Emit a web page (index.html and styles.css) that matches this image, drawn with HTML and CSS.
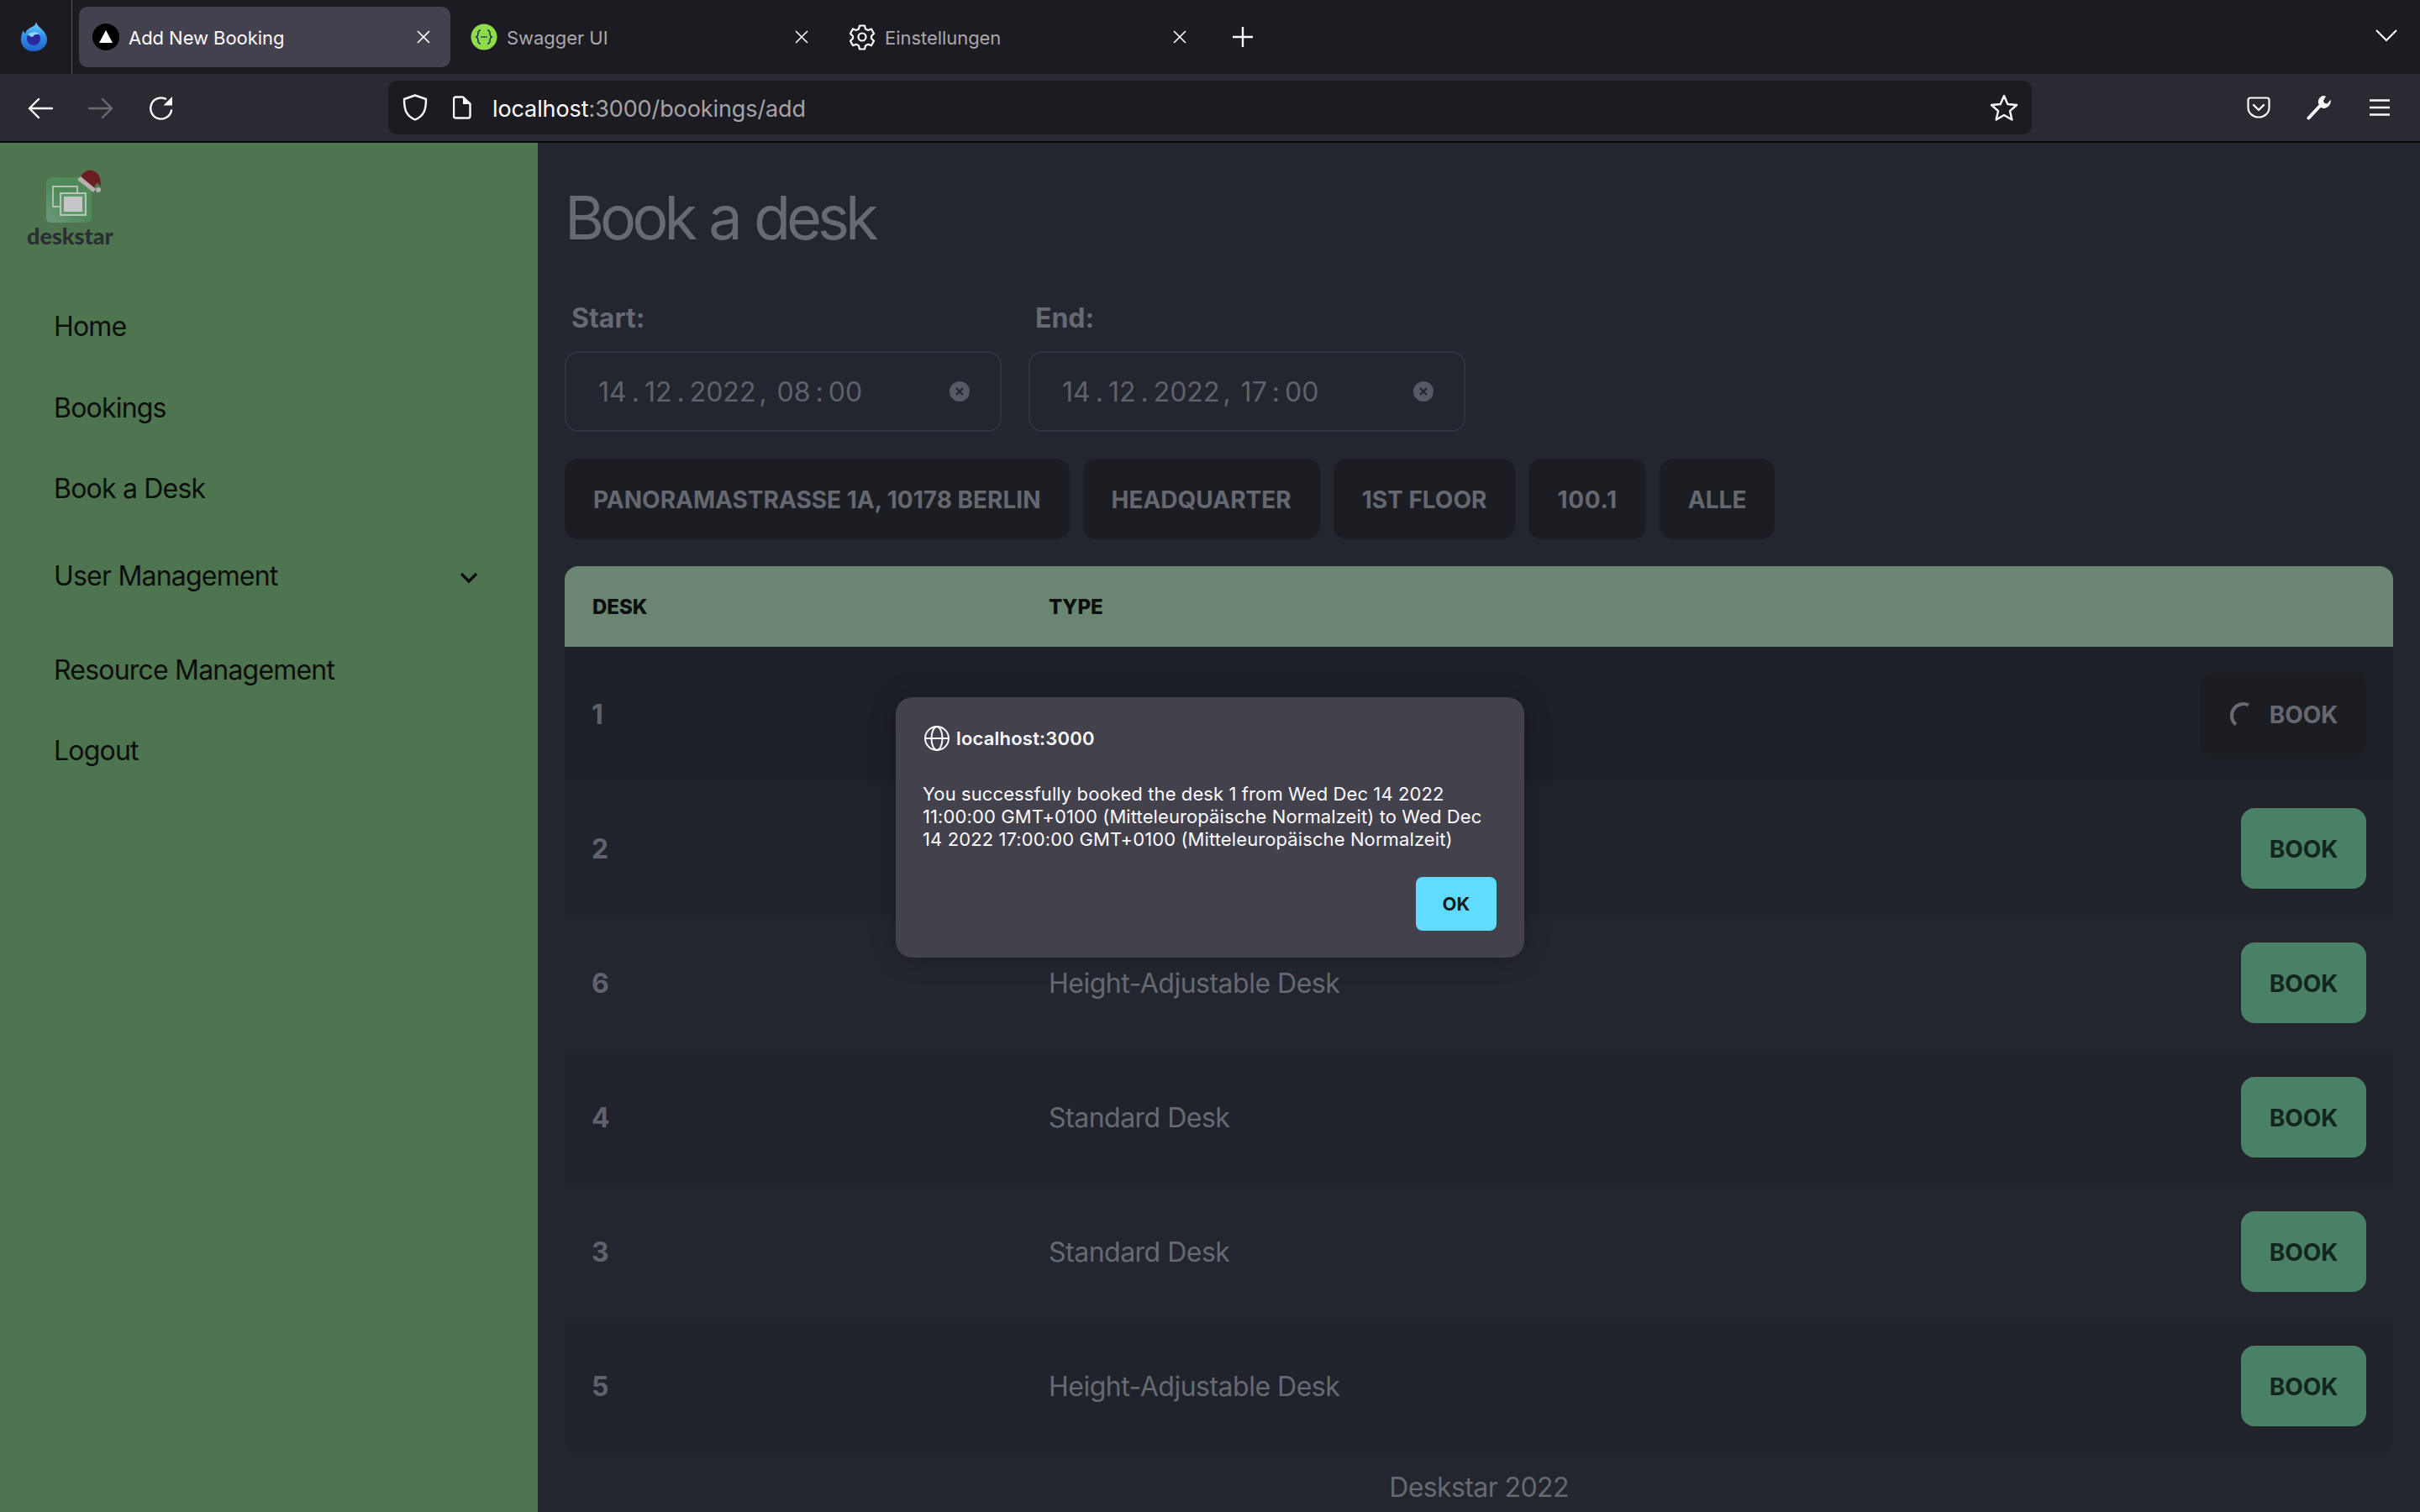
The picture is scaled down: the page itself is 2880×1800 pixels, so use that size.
FILE: index.html
```html
<!DOCTYPE html>
<html lang="en">
<head>
<meta charset="utf-8">
<title>Add New Booking</title>
<link rel="stylesheet" href="styles.css">
</head>
<body>
<header class="tabbar">
  <div class="fx-slot">
    <svg width="34" height="36" viewBox="0 0 34 36">
      <defs><linearGradient id="fxg" x1="0" y1="0" x2="0" y2="1"><stop offset="0" stop-color="#6fd3ff"/><stop offset="0.5" stop-color="#2f8fe8"/><stop offset="1" stop-color="#1f63cf"/></linearGradient></defs>
      <path d="M20 1c1 4 4 6 7 9 4 4 6 8 6 12 0 8-7 14-16 14S2 30 2 22c0-4 1-8 3-11 0 2 1 3 2 4 1-4 4-6 8-8 3-1 5-3 5-6z" fill="url(#fxg)"/>
      <circle cx="17" cy="21" r="8" fill="#2b2a9c"/>
      <path d="M10 16c4-4 11-4 15 0-4-1-8 0-9 3-2 0-4-1-6-3z" fill="#8ad4ff"/>
    </svg>
  </div>
  <div class="tab tab-active">
    <svg class="favicon" width="32" height="32" viewBox="0 0 32 32"><circle cx="16" cy="16" r="16" fill="#000"/><path d="M16 8l8 15H8z" fill="#fff"/></svg>
    <span class="tab-title">Add New Booking</span>
    <svg class="tab-close" width="16" height="16" viewBox="0 0 16 16"><path d="M1 1l14 14M15 1L1 15" stroke="#fbfbfe" stroke-width="1.6" fill="none"/></svg>
  </div>
  <div class="tab">
    <svg class="favicon" width="32" height="32" viewBox="0 0 32 32"><circle cx="16" cy="16" r="15.5" fill="#8edb4b"/><path d="M12 8c-3 0-3 2-3 4s0 3-2 4c2 1 2 2 2 4s0 4 3 4M20 8c3 0 3 2 3 4s0 3 2 4c-2 1-2 2-2 4s0 4-3 4" stroke="#173647" stroke-width="1.6" fill="none"/><path d="M12.500 16h7" stroke="#173647" stroke-width="1.800" stroke-dasharray="1.800 1" fill="none"/></svg>
    <span class="tab-title">Swagger UI</span>
    <svg class="tab-close" width="16" height="16" viewBox="0 0 16 16"><path d="M1 1l14 14M15 1L1 15" stroke="#fbfbfe" stroke-width="1.6" fill="none"/></svg>
  </div>
  <div class="tab">
    <svg class="favicon" width="32" height="32" viewBox="0 0 32 32"><g fill="none" stroke="#fbfbfe" stroke-width="2.200" stroke-linejoin="round"><path d="M13 2.500h6l1 4 3 1.500 4-1.500 3 5.500-3 3v2.800l3 3-3 5.300-4-1.300-3 1.600-1 4.100h-6l-1-4.100-3-1.600-4 1.300-3-5.300 3-3v-2.800l-3-3 3-5.500 4 1.500 3-1.500z"/><circle cx="16" cy="16" r="4.500"/></g></svg>
    <span class="tab-title">Einstellungen</span>
    <svg class="tab-close" width="16" height="16" viewBox="0 0 16 16"><path d="M1 1l14 14M15 1L1 15" stroke="#fbfbfe" stroke-width="1.6" fill="none"/></svg>
  </div>
  <div class="new-tab">
    <svg width="24" height="24" viewBox="0 0 24 24"><path d="M12 0v24M0 12h24" stroke="#fbfbfe" stroke-width="2.400" fill="none"/></svg>
  </div>
  <div class="tab-list">
    <svg width="26" height="16" viewBox="0 0 26 16"><path d="M1 2l12 12L25 2" stroke="#fbfbfe" stroke-width="2" fill="none"/></svg>
  </div>
</header>

<nav class="toolbar">
  <div class="tool"><svg width="30" height="26" viewBox="0 0 30 26"><path d="M29 13H3M13 2L2 13l11 11" stroke="#fbfbfe" stroke-width="2.400" fill="none" stroke-linecap="round" stroke-linejoin="round"/></svg></div>
  <div class="tool"><svg width="30" height="26" viewBox="0 0 30 26"><path d="M1 13h26M17 2l11 11-11 11" stroke="#6c6b72" stroke-width="2.400" fill="none" stroke-linecap="round" stroke-linejoin="round"/></svg></div>
  <div class="tool"><svg width="30" height="30" viewBox="0 0 30 30"><path d="M27 17.500A12.500 12.500 0 1 1 20 3.700" stroke="#fbfbfe" stroke-width="2.400" fill="none" stroke-linecap="round"/><path d="M28 1v10.500H17.500z" fill="#fbfbfe"/></svg></div>
  <div class="urlbar">
    <svg class="url-shield" width="30" height="32" viewBox="0 0 30 32"><path d="M15 1.500L28 6c0 12-2 20-13 24.500C4 26 2 18 2 6z" stroke="#fbfbfe" stroke-width="2.400" fill="none" stroke-linejoin="round"/></svg>
    <svg class="url-doc" width="22" height="28" viewBox="0 0 22 28"><path d="M3 1.500h9l8.500 8V24a2.500 2.500 0 0 1-2.500 2.500H3.500A2.500 2.500 0 0 1 1 24V4a2.500 2.500 0 0 1 2-2.500z" stroke="#fbfbfe" stroke-width="2.400" fill="none" stroke-linejoin="round"/><path d="M12 2v8h8" fill="#fbfbfe"/></svg>
    <span class="url-text"><span class="url-host">localhost</span>:3000/bookings/add</span>
    <svg class="url-star" width="34" height="32" viewBox="0 0 34 32"><path d="M17 2l4.300 10 10.700 1-8 7.200 2.400 10.300L17 25l-9.400 5.500L10 20.200 2 13l10.700-1z" stroke="#fbfbfe" stroke-width="2.400" fill="none" stroke-linejoin="round"/></svg>
  </div>
  <div class="tool-group">
    <div class="tool"><svg width="28" height="26" viewBox="0 0 28 26"><path d="M4 1.500h20a2.500 2.500 0 0 1 2.500 2.500v9c0 7-6 11.500-12.500 11.500S1.500 20 1.500 13V4A2.500 2.500 0 0 1 4 1.500z" stroke="#fbfbfe" stroke-width="2.200" fill="none"/><path d="M8 10l6 6 6-6" stroke="#fbfbfe" stroke-width="2.400" fill="none" stroke-linecap="round" stroke-linejoin="round"/></svg></div>
    <div class="tool"><svg width="30" height="30" viewBox="0 0 30 30"><path d="M2.500 27.500l13-14" stroke="#fbfbfe" stroke-width="4" stroke-linecap="round"/><path d="M20 1c-4 1-7 5-6 9s3 6 6 6c5 0 9-4 9-9l-5 4-3-1-1-3 4-5z" fill="#fbfbfe" transform="rotate(-8 20 8)"/></svg></div>
    <div class="tool"><svg width="24" height="20" viewBox="0 0 24 20"><path d="M0 1.500h24M0 10h24M0 18.500h24" stroke="#fbfbfe" stroke-width="2.400" fill="none"/></svg></div>
  </div>
</nav>

<div class="app">
  <aside class="sidebar">
    <div class="brand">
      <svg class="brand-mark" width="92" height="64" viewBox="0 0 92 64">
        <defs><linearGradient id="mark" x1="0" y1="1" x2="1" y2="0"><stop offset="0" stop-color="#6f9a80"/><stop offset="0.45" stop-color="#4f8b5a"/><stop offset="1" stop-color="#4c8a56"/></linearGradient></defs>
        <rect x="23" y="9" width="54" height="54" rx="6" fill="url(#mark)"/>
        <rect x="31" y="20" width="29" height="24" fill="none" stroke="#b3bdb6" stroke-width="2"/>
        <rect x="40" y="28" width="30" height="26" fill="#5c9a68" stroke="#b9c2bc" stroke-width="2"/>
        <rect x="44" y="32" width="22" height="18" fill="#c5c5ca"/>
        <path d="M64 9C66 3 72 0 78 1c8 2 10 9 10 20-1-3-3-5-5-5l-5 8z" fill="#6a1e24"/>
        <path d="M60 12l4-4 18 15-3 4z" fill="#b8b0b0"/>
        <circle cx="85" cy="24" r="3" fill="#b8b0b0"/>
      </svg>
      <span class="brand-name">deskstar</span>
    </div>
    <ul class="menu">
      <li class="menu-item">Home</li>
      <li class="menu-item">Bookings</li>
      <li class="menu-item">Book a Desk</li>
      <li class="menu-item menu-group">User Management
        <svg width="22" height="14" viewBox="0 0 22 14"><path d="M2 2l9 9 9-9" stroke="#0b0e0b" stroke-width="3.400" fill="none"/></svg>
      </li>
      <li class="menu-item">Resource Management</li>
      <li class="menu-item">Logout</li>
    </ul>
  </aside>

  <main class="content">
    <h1 class="title">Book a desk</h1>
    <div class="dates">
      <div class="field">
        <label class="field-label">Start:</label>
        <div class="date-input">
          <span class="date-text">14<i class="sep">.</i>12<i class="sep">.</i>2022<i class="comma">,</i>08<i class="sep">:</i>00</span>
          <svg width="24" height="24" viewBox="0 0 24 24"><circle cx="12" cy="12" r="12" fill="#565963"/><path d="M8 8l8 8M16 8l-8 8" stroke="#23262f" stroke-width="2.400"/></svg>
        </div>
      </div>
      <div class="field">
        <label class="field-label">End:</label>
        <div class="date-input">
          <span class="date-text">14<i class="sep">.</i>12<i class="sep">.</i>2022<i class="comma">,</i>17<i class="sep">:</i>00</span>
          <svg width="24" height="24" viewBox="0 0 24 24"><circle cx="12" cy="12" r="12" fill="#565963"/><path d="M8 8l8 8M16 8l-8 8" stroke="#23262f" stroke-width="2.400"/></svg>
        </div>
      </div>
    </div>
    <div class="filters">
      <button class="btn btn-dark">Panoramastrasse 1a, 10178 Berlin</button>
      <button class="btn btn-dark">Headquarter</button>
      <button class="btn btn-dark">1st Floor</button>
      <button class="btn btn-dark btn-number">100.1</button>
      <button class="btn btn-dark">Alle</button>
    </div>
    <section class="table">
      <div class="thead"><span>Desk</span><span>Type</span></div>
      <div class="row row-hover">
        <b class="desk">1</b><span class="type"></span>
        <button class="btn btn-dark">
          <svg class="spinner" width="30" height="34" viewBox="0 0 30 34"><path d="M24 5.300A14 14 0 0 0 8.900 28.600" stroke="#696b74" stroke-width="4" fill="none"/></svg>Book</button>
      </div>
      <div class="row row-odd"><b class="desk">2</b><span class="type"></span><button class="btn btn-book">Book</button></div>
      <div class="row"><b class="desk">6</b><span class="type">Height-Adjustable Desk</span><button class="btn btn-book">Book</button></div>
      <div class="row row-odd"><b class="desk">4</b><span class="type">Standard Desk</span><button class="btn btn-book">Book</button></div>
      <div class="row"><b class="desk">3</b><span class="type">Standard Desk</span><button class="btn btn-book">Book</button></div>
      <div class="row row-odd row-last"><b class="desk">5</b><span class="type">Height-Adjustable Desk</span><button class="btn btn-book">Book</button></div>
    </section>
    <footer class="footer">Deskstar 2022</footer>
  </main>
</div>

<div class="dialog">
  <div class="dialog-head">
    <svg width="30" height="30" viewBox="0 0 30 30"><g fill="none" stroke="#fbfbfe" stroke-width="2"><circle cx="15" cy="15" r="14"/><ellipse cx="15" cy="15" rx="6.500" ry="14"/><path d="M1 15h28"/></g></svg>
    <span>localhost:3000</span>
  </div>
  <p class="dialog-body">You successfully booked the desk 1 from Wed Dec 14 2022 11:00:00 GMT+0100 (Mitteleuropäische Normalzeit) to Wed Dec 14 2022 17:00:00 GMT+0100 (Mitteleuropäische Normalzeit)</p>
  <div class="dialog-foot"><button class="dialog-ok">OK</button></div>
</div>
</body>
</html>
```

FILE: styles.css
```css
* { box-sizing: border-box; }
html, body { margin: 0; padding: 0; }
body {
  width: 2880px;
  height: 1800px;
  overflow: hidden;
  background: #23262f;
  font-family: Inter, "Liberation Sans", sans-serif;
  display: flex;
  flex-direction: column;
}

/* browser chrome */
.tabbar {
  height: 88px;
  flex: none;
  background: #1c1b22;
  display: flex;
  align-items: center;
}
.fx-slot {
  width: 86px;
  height: 88px;
  display: flex;
  align-items: center;
  padding: 0 0 2px 23px;
  border-right: 1px solid #56555c;
  margin-right: 8px;
}
.tab {
  width: 442px;
  height: 72px;
  margin-right: 8px;
  padding: 0 24px 0 16px;
  display: flex;
  align-items: center;
  gap: 11px;
  border-radius: 10px;
  color: #a9a8ad;
  font-size: 22px;
  letter-spacing: -0.05px;
}
.tab-active { background: #42414d; color: #fbfbfe; }
.favicon { flex: none; }
.tab-title { flex: 1; padding-top: 2px; }
.tab-close { flex: none; }
.new-tab {
  width: 70px;
  display: flex;
  justify-content: center;
}
.tab-list {
  margin-left: auto;
  padding-right: 27px;
  display: flex;
  padding-bottom: 4px;
}
.toolbar {
  height: 82px;
  flex: none;
  background: #2b2a33;
  border-bottom: 2px solid #08080a;
  padding: 8px 12px 8px 12px;
  display: flex;
  align-items: flex-start;
}
.tool {
  width: 72px;
  height: 64px;
  display: flex;
  align-items: center;
  justify-content: center;
}
.toolbar > .tool { padding-top: 2px; }
.urlbar {
  width: 1956px;
  height: 64px;
  margin-left: 234px;
  background: #1c1b22;
  border-radius: 10px;
  display: flex;
  align-items: center;
  padding: 0 16px 0 17px;
}
.url-shield { flex: none; }
.url-doc { margin-left: 30px; flex: none; }
.url-text {
  margin-left: 25px;
  padding-top: 2px;
  flex: 1;
  font-size: 27px;
  letter-spacing: -0.1px;
  color: #a3a3a8;
}
.url-host { color: #fbfbfe; }
.tool-group { display: flex; margin-left: 234px; }

/* app */
.app { flex: 1; display: flex; min-height: 0; }
.sidebar {
  width: 640px;
  flex: none;
  background: #4f7550;
  padding-top: 32px;
}
.brand {
  width: 100px;
  margin-left: 32px;
  display: flex;
  flex-direction: column;
}
.brand-mark { display: block; margin-bottom: 4px; }
.brand-name {
  font-family: Lato, sans-serif;
  font-weight: 900;
  font-size: 27px;
  line-height: 22px;
  color: #2a2d32;
}
.menu { list-style: none; margin: 48px 0 0; padding: 0; }
.menu-item {
  height: 96px;
  padding: 0 64px;
  display: flex;
  align-items: center;
  font-size: 32px;
  letter-spacing: -0.8px;
  color: #0b0e0b;
}
.menu-item:nth-child(2) { margin-top: 1px; }
.menu-group {
  height: 112px;
  justify-content: space-between;
  margin-bottom: 8px;
}
.menu-group svg { margin: 6px 7px 0 0; }

.content {
  flex: 1;
  min-width: 0;
  padding: 49px 32px 0;
  display: flex;
  flex-direction: column;
}
.title {
  margin: 0;
  font-size: 72px;
  line-height: 80px;
  font-weight: 400;
  letter-spacing: -5px;
  word-spacing: 3px;
  color: #666a73;
}
.dates { display: flex; gap: 32px; margin-top: 56px; }
.field { width: 520px; }
.field-label {
  display: block;
  padding-left: 8px;
  margin-bottom: 15px;
  font-size: 32px;
  line-height: 48px;
  font-weight: 700;
  color: #666a73;
}
.date-input {
  height: 96px;
  border: 2px solid #30343e;
  border-radius: 16px;
  padding: 0 36px 0 38px;
  display: flex;
  align-items: center;
  justify-content: space-between;
}
.date-text { font-size: 32px; color: #5f626c; }
.date-text i { font-style: normal; }
.sep { margin: 0 6px; }
.comma { margin: 0 12px 0 4px; }

.filters { display: flex; gap: 16px; margin-top: 32px; }
.btn {
  height: 96px;
  padding: 2px 34px 0;
  border: 0;
  border-radius: 16px;
  font-family: inherit;
  font-size: 28px;
  font-weight: 700;
  text-transform: uppercase;
  display: inline-flex;
  align-items: center;
}
.btn-number { letter-spacing: 0.7px; }
.row .btn { padding: 2px 33.5px 0; }
.btn-dark { background: #1b1d22; color: #666871; }
.btn-book { background: #4a8066; color: #12261d; }
.spinner { margin-right: 19px; }

.table { margin-top: 32px; display: flex; flex-direction: column; }
.thead {
  height: 96px;
  background: #6b8573;
  border-radius: 16px 16px 0 0;
  padding-left: 33px;
  display: grid;
  grid-template-columns: 543px 1fr;
  align-items: center;
  font-size: 24px;
  font-weight: 800;
  text-transform: uppercase;
  color: #0b0e0d;
}
.row {
  height: 160px;
  padding: 0 32px;
  display: grid;
  grid-template-columns: 544px 1fr auto;
  align-items: center;
  background: #23262f;
}
.row-odd { background: #20232b; }
.row-hover { background: #1e2028; }
.row-last { border-radius: 0 0 16px 16px; }
.desk { font-size: 32px; font-weight: 700; color: #5f626b; }
.type { font-size: 32px; letter-spacing: -0.5px; color: #666a72; }
.footer {
  margin-top: 17px;
  text-align: center;
  font-size: 32px;
  line-height: 48px;
  letter-spacing: -0.6px;
  color: #666a72;
}

/* modal prompt */
.dialog {
  position: absolute;
  left: 1066px;
  top: 830px;
  width: 748px;
  height: 310px;
  padding: 34px 33px 32px 32px;
  background: #43414c;
  border-radius: 20px;
  box-shadow: 0 0 32px rgba(0, 0, 0, 0.22);
  color: #fbfbfe;
  display: flex;
  flex-direction: column;
}
.dialog-head {
  display: flex;
  align-items: center;
  gap: 8px;
  padding-left: 2px;
  font-size: 22px;
  font-weight: 600;
  letter-spacing: 0.2px;
}
.dialog-body {
  margin: 38px 0 0;
  font-size: 22px;
  line-height: 27px;
  letter-spacing: 0.1px;
}
.dialog-foot { margin-top: auto; display: flex; justify-content: flex-end; }
.dialog-ok {
  width: 96px;
  height: 64px;
  border: 0;
  border-radius: 8px;
  background: #60dcff;
  color: #1c1b22;
  font-family: inherit;
  font-size: 22px;
  font-weight: 700;
}
```
